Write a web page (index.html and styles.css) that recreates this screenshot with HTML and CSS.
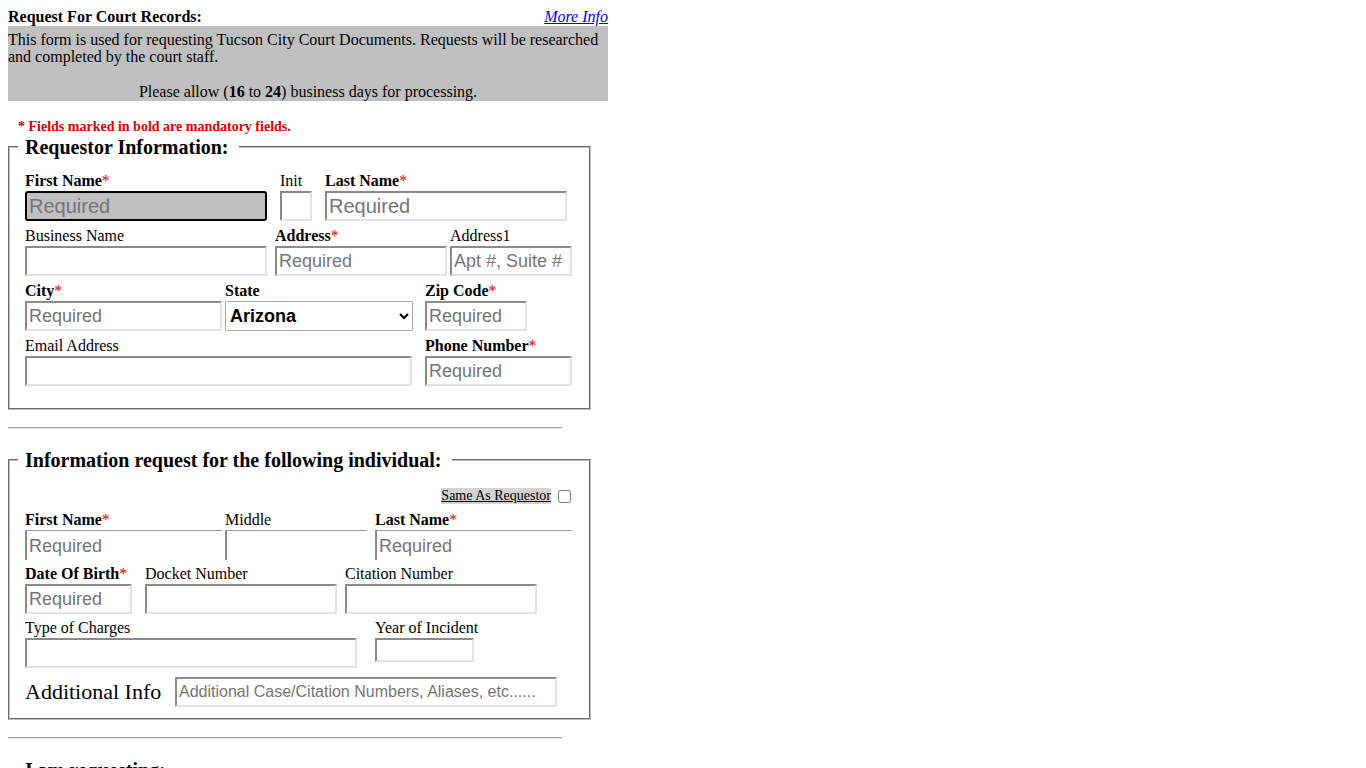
FILE: index.html
```html
<!DOCTYPE html>
<html lang="en">
<head>
    <meta charset="UTF-8">
    <meta name="viewport" content="width=device-width, initial-scale=1.0">
    <title>Request For Court Records</title>
    <link rel="stylesheet" href="styles.css">
</head>
<body>
<div class="page">
    <div class="head">
        <span class="head-title">Request For Court Records:</span>
        <a href="#" class="more">More Info</a>
    </div>
    <div class="intro">
        This form is used for requesting Tucson City Court Documents. Requests will be researched and completed by the court staff.
        <p class="allow">Please allow (<b>16</b> to <b>24</b>) business days for processing.</p>
    </div>

    <p class="note">* Fields marked in bold are mandatory fields.</p>

    <form>
        <fieldset>
            <legend>Requestor Information:</legend>
            <div class="row">
                <div class="field gap13">
                    <label class="req">First Name<span>*</span></label>
                    <input type="text" class="w242 lg focus" placeholder="Required">
                </div>
                <div class="field gap13">
                    <label>Init</label>
                    <input type="text" class="w32">
                </div>
                <div class="field">
                    <label class="req">Last Name<span>*</span></label>
                    <input type="text" class="w242 lg" placeholder="Required">
                </div>
            </div>
            <div class="row">
                <div class="field gap8">
                    <label>Business Name</label>
                    <input type="text" class="w242">
                </div>
                <div class="field gap3">
                    <label class="req">Address<span>*</span></label>
                    <input type="text" class="w172" placeholder="Required">
                </div>
                <div class="field">
                    <label>Address1</label>
                    <input type="text" class="w122" placeholder="Apt #, Suite #">
                </div>
            </div>
            <div class="row">
                <div class="field gap3">
                    <label class="req">City<span>*</span></label>
                    <input type="text" class="w197" placeholder="Required">
                </div>
                <div class="field gap12">
                    <label class="req">State</label>
                    <select class="state">
                        <option>Arizona</option>
                        <option>California</option>
                        <option>Nevada</option>
                        <option>New Mexico</option>
                    </select>
                </div>
                <div class="field">
                    <label class="req">Zip Code<span>*</span></label>
                    <input type="text" class="w102" placeholder="Required">
                </div>
            </div>
            <div class="row">
                <div class="field gap13">
                    <label>Email Address</label>
                    <input type="text" class="w387">
                </div>
                <div class="field">
                    <label class="req">Phone Number<span>*</span></label>
                    <input type="text" class="w147" placeholder="Required">
                </div>
            </div>
        </fieldset>

        <hr>

        <fieldset class="second">
            <legend>Information request for the following individual:</legend>
            <div class="same">
                <span class="same-text">Same As Requestor</span>
                <input type="checkbox">
            </div>
            <div class="row">
                <div class="field gap3">
                    <label class="req">First Name<span>*</span></label>
                    <input type="text" class="w197 flat" placeholder="Required">
                </div>
                <div class="field gap8">
                    <label>Middle</label>
                    <input type="text" class="w142 flat">
                </div>
                <div class="field">
                    <label class="req">Last Name<span>*</span></label>
                    <input type="text" class="w197 flat" placeholder="Required">
                </div>
            </div>
            <div class="row">
                <div class="field gap13">
                    <label class="req">Date Of Birth<span>*</span></label>
                    <input type="text" class="w107" placeholder="Required">
                </div>
                <div class="field gap8">
                    <label>Docket Number</label>
                    <input type="text" class="w192">
                </div>
                <div class="field">
                    <label>Citation Number</label>
                    <input type="text" class="w192">
                </div>
            </div>
            <div class="row">
                <div class="field gap18">
                    <label>Type of Charges</label>
                    <input type="text" class="w332">
                </div>
                <div class="field">
                    <label>Year of Incident</label>
                    <input type="text" class="w99 short">
                </div>
            </div>
            <div class="row extra">
                <label class="big">Additional Info</label>
                <input type="text" class="w382 small" placeholder="Additional Case/Citation Numbers, Aliases, etc......">
            </div>
        </fieldset>

        <hr>

        <fieldset class="second">
            <legend>I am requesting:</legend>
            <div class="row">
                <div class="field">
                    <label>Documents</label>
                    <input type="text" class="w242">
                </div>
            </div>
        </fieldset>
    </form>
</div>
</body>
</html>
```

FILE: styles.css
```css
body {
    margin: 8px;
    font-family: "Liberation Serif", "Times New Roman", serif;
    color: #000;
    background: #fff;
}
.page {
    width: 600px;
}
.head {
    display: flex;
    justify-content: space-between;
    align-items: flex-end;
    height: 18px;
    font-size: 16px;
    line-height: 18px;
}
.head-title {
    font-weight: bold;
}
.more {
    color: #00e;
    font-style: italic;
    font-size: 16px;
}
.intro {
    background-color: #c0c0c0;
    font-size: 16px;
    line-height: 17px;
    padding: 5px 0 0 0;
    height: 70px;
}
.allow {
    margin: 18px 0 0 0;
    text-align: center;
}
.note {
    color: #e00000;
    font-weight: bold;
    font-size: 14px;
    margin: 17px 0 0 10px;
    line-height: 18px;
}
fieldset {
    width: 583px;
    box-sizing: border-box;
    margin: 0;
    padding: 13px 15px 22px 15px;
    border: 2px groove #c0c0c0;
}
legend {
    font-size: 20px;
    font-weight: bold;
    line-height: 22px;
    padding: 0 10px 0 7px;
    margin-left: -7px;
}
.row {
    display: flex;
    align-items: flex-start;
    margin-top: 5px;
}
.row:first-of-type {
    margin-top: 0;
}
.field label {
    display: block;
    font-size: 16px;
    line-height: 20px;
}
label.req {
    font-weight: bold;
}
label span {
    color: #e00000;
    font-weight: normal;
}
input[type=text] {
    box-sizing: border-box;
    height: 30px;
    margin: 0;
    padding: 1px 2px;
    font-family: "Liberation Sans", Arial, sans-serif;
    font-size: 18px;
    border-width: 2px;
    border-style: solid;
    border-color: #8a8a8a #e3e3e3 #e3e3e3 #8a8a8a;
    background: #fff;
}
input::placeholder {
    color: #757575;
}
input.lg {
    font-size: 20px;
}
input.focus {
    background-color: #c0c0c0;
    border: 2px solid #000;
    border-radius: 3px;
}
input.flat {
    border-width: 1px 0 0 2px;
    border-top-color: #9a9a9a;
    padding-top: 2px;
}
input.short {
    height: 24px;
}
input.small {
    font-size: 16px;
}
.state {
    box-sizing: border-box;
    width: 188px;
    height: 30px;
    margin: 0;
    font-family: "Liberation Sans", Arial, sans-serif;
    font-size: 18px;
    font-weight: bold;
    border: 1px solid #a9a9a9;
    border-radius: 2px;
    background: #fff;
    color: #000;
}

.gap3 { margin-right: 3px; }
.gap8 { margin-right: 8px; }
.gap12 { margin-right: 12px; }
.gap13 { margin-right: 13px; }
.gap18 { margin-right: 18px; }

.w32 { width: 32px; }
.w99 { width: 99px; }
.w102 { width: 102px; }
.w107 { width: 107px; }
.w122 { width: 122px; }
.w142 { width: 142px; }
.w147 { width: 147px; }
.w172 { width: 172px; }
.w192 { width: 192px; }
.w197 { width: 197px; }
.w242 { width: 242px; }
.w332 { width: 332px; }
.w382 { width: 382px; }
.w387 { width: 387px; }

hr {
    width: 554px;
    margin: 17px 0 20px 0;
    border: 0;
    border-top: 1px solid #a0a0a0;
    border-bottom: 1px solid #e8e8e8;
}
.second {
    padding-top: 0;
    padding-bottom: 11px;
}
.same {
    display: flex;
    justify-content: flex-end;
    align-items: center;
    height: 16px;
    margin: 17px 0 6px 0;
}
.same-text {
    background-color: #d3d3d3;
    text-decoration: underline;
    font-size: 14px;
    line-height: 16px;
}
.same input {
    width: 13px;
    height: 13px;
    margin: 0 3px 0 7px;
}
.second .row {
    margin-top: 4px;
}
.second .row:first-of-type {
    margin-top: 0;
}
.row.extra {
    align-items: center;
    margin-top: 9px;
}
.big {
    font-size: 22px;
    width: 150px;
}
```
